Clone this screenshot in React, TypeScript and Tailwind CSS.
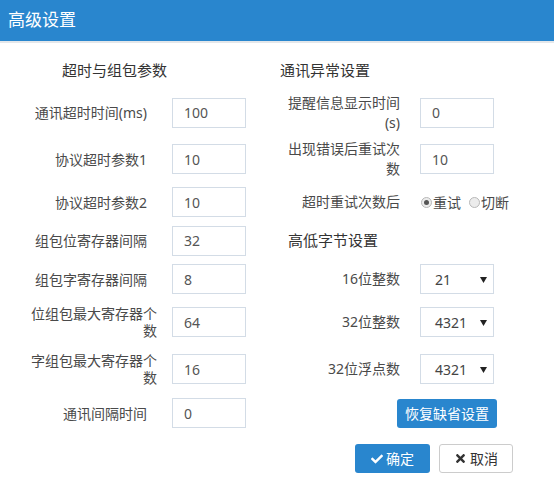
import React from 'react';
import { FaCheck, FaTimes } from 'react-icons/fa';

const font = "font-['Noto_Sans','Noto_Sans_CJK_SC',sans-serif]";

const NumInput = ({ value }: { value: string }) => (
  <div className="w-[74px] h-[30px] border border-[#d3dce6] flex items-center pl-[11px] text-[14px] text-[#555]">
    {value}
  </div>
);

const Select = ({ value }: { value: string }) => (
  <div className="w-[74px] h-[30px] border border-[#d3dce6] flex items-center justify-between pl-[14px] pr-[6px] text-[14px] text-[#444]">
    <span>{value}</span>
    <svg width="7" height="7" viewBox="0 0 7 7">
      <polygon points="0,1 7,1 3.5,7" fill="#222" />
    </svg>
  </div>
);

const Radio = ({ checked, label }: { checked?: boolean; label: string }) => (
  <label className="flex items-center">
    <span className="w-[11px] h-[11px] rounded-full border border-[#b8b8b8] bg-[#ececec] flex items-center justify-center">
      {checked && <span className="w-[5px] h-[5px] rounded-full bg-[#555]" />}
    </span>
    <span className="ml-px">{label}</span>
  </label>
);

// left column label: plain, or wrapped into a fixed-width box
const LeftLabel = ({ text, wrap }: { text: string; wrap?: boolean }) =>
  wrap ? (
    <div className="flex justify-end pr-[15px]">
      <div className="w-[127px] text-right leading-[17px]">{text}</div>
    </div>
  ) : (
    <div className="text-right pr-[25px]">{text}</div>
  );

const RightLabel = ({ text }: { text: string }) => (
  <div className="flex justify-end pr-[20px]">
    <div className="w-[113px] text-right leading-[20px]">{text}</div>
  </div>
);

export default function App() {
  return (
    <div className={`w-[554px] h-[487px] bg-white ${font} text-[#4a4a4a] text-[14px]`}>
      <div className="h-[43px] bg-[#2986ce] border-b-2 border-[#e4e7ea] flex items-center pl-[8px] pb-[1px] text-white text-[17px]">
        高级设置
      </div>

      <div className="grid grid-cols-[172px_108px_140px_134px] grid-rows-[46px_47px_46px_40px_37px_40px_46px_48px_40px] items-center">
        {/* section headers */}
        <div className="col-span-2 self-start pt-[16px] pl-[62px] text-[15px] leading-[22px] text-[#333]">超时与组包参数</div>
        <div className="col-span-2 self-start pt-[16px] text-[15px] leading-[22px] text-[#333]">通讯异常设置</div>

        {/* row 1 */}
        <LeftLabel text="通讯超时时间(ms)" />
        <NumInput value="100" />
        <RightLabel text="提醒信息显示时间(s)" />
        <NumInput value="0" />

        {/* row 2 */}
        <LeftLabel text="协议超时参数1" />
        <NumInput value="10" />
        <RightLabel text="出现错误后重试次数" />
        <NumInput value="10" />

        {/* row 3 */}
        <LeftLabel text="协议超时参数2" />
        <NumInput value="10" />
        <RightLabel text="超时重试次数后" />
        <div className="flex items-center gap-[8px] pl-px">
          <Radio checked label="重试" />
          <Radio label="切断" />
        </div>

        {/* row 4 */}
        <LeftLabel text="组包位寄存器间隔" />
        <NumInput value="32" />
        <div className="col-span-2 pl-[8px] text-[15px] text-[#333]">高低字节设置</div>

        {/* row 5 */}
        <LeftLabel text="组包字寄存器间隔" />
        <NumInput value="8" />
        <RightLabel text="16位整数" />
        <Select value="21" />

        {/* row 6 */}
        <LeftLabel text="位组包最大寄存器个数" wrap />
        <NumInput value="64" />
        <RightLabel text="32位整数" />
        <Select value="4321" />

        {/* row 7 */}
        <LeftLabel text="字组包最大寄存器个数" wrap />
        <NumInput value="16" />
        <RightLabel text="32位浮点数" />
        <Select value="4321" />

        {/* row 8 */}
        <LeftLabel text="通讯间隔时间" />
        <NumInput value="0" />
        <div className="col-span-2 pl-[117px]">
          <button className="w-[100px] h-[29px] rounded-[3px] bg-[#2986ce] text-white text-[14px]">恢复缺省设置</button>
        </div>
      </div>

      <div className="flex justify-end gap-[9px] pr-[41px] mt-[11px]">
        <button className="w-[75px] h-[29px] rounded-[3px] bg-[#2986ce] text-white flex items-center justify-center gap-[3px]">
          <FaCheck className="w-[12px] h-[12px]" />
          确定
        </button>
        <button className="w-[74px] h-[29px] rounded-[3px] border border-[#ccc] bg-white text-[#333] flex items-center justify-center gap-[3px]">
          <FaTimes className="w-[13px] h-[13px]" />
          取消
        </button>
      </div>
    </div>
  );
}
